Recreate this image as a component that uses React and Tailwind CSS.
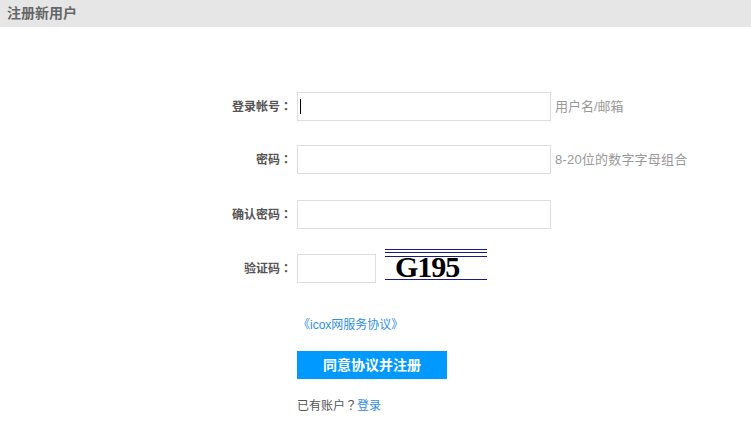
import React from 'react';

const font = { fontFamily: '"Liberation Sans", "Noto Sans CJK SC", sans-serif' };
const tc = { fontFamily: '"Noto Sans CJK TC", sans-serif' };

function Row({ label, children, className = '' }) {
    return (
        <div className={`flex items-center ${className}`}>
            <div className="w-[292px] shrink-0 text-right text-[12px] font-bold text-[#555]">
                {label}<span style={tc}>：</span>
            </div>
            <div className="ml-[5px] flex items-center">{children}</div>
        </div>
    );
}

export default function App() {
    return (
        <div className="w-[751px] h-[444px] bg-white overflow-hidden" style={font}>
            {/* Title bar */}
            <div className="h-[27px] bg-[#e6e6e6] flex items-center pl-[7px]">
                <span className="text-[14px] font-bold text-[#666]">注册新用户</span>
            </div>

            {/* Form */}
            <div className="pt-[65px]">
                <Row label="登录帐号">
                    <div className="relative">
                        <input className="w-[254px] h-[29px] border border-[#dedede] outline-none px-2 text-[12px]" />
                        <span className="absolute left-[3px] top-[7px] w-px h-[15px] bg-black"></span>
                    </div>
                    <span className="ml-[4px] text-[13px] text-[#999]">用户名/邮箱</span>
                </Row>

                <Row label="密码" className="mt-[24px]">
                    <input type="password" className="w-[254px] h-[29px] border border-[#dedede] outline-none px-2 text-[12px]" />
                    <span className="ml-[4px] text-[13px] tracking-[0.2px] text-[#999]">8-20位的数字字母组合</span>
                </Row>

                <Row label="确认密码" className="mt-[26px]">
                    <input type="password" className="w-[254px] h-[29px] border border-[#dedede] outline-none px-2 text-[12px]" />
                </Row>

                <Row label="验证码" className="mt-[25px]">
                    <input className="w-[79px] h-[29px] border border-[#dedede] outline-none px-2 text-[12px]" />
                    {/* Captcha image */}
                    <div className="relative ml-[9px] -mt-[8px] w-[102px] h-[34px] bg-white">
                        <div className="absolute left-0 right-0 top-[1px] h-px bg-[#1a1a8c]"></div>
                        <div className="absolute left-0 right-0 top-[4px] h-px bg-[#1a1a8c]"></div>
                        <div className="absolute left-0 right-0 top-[8px] h-px bg-[#1a1a8c]"></div>
                        <span
                            className="absolute left-[10px] top-[2px] text-[30px] font-bold leading-[34px] text-black tracking-[-1px]"
                            style={{ fontFamily: '"Liberation Serif", serif' }}
                        >
                            G195
                        </span>
                        <div className="absolute left-0 right-0 top-[31px] h-px bg-[#1a1a8c]"></div>
                    </div>
                </Row>

                <div className="pl-[298px] mt-[29px]">
                    <a className="text-[12px] text-[#2f8de4] cursor-pointer">《icox网服务协议》</a>
                </div>

                <div className="pl-[297px] mt-[15px]">
                    <button className="w-[150px] h-[28px] bg-[#0099ff] text-white text-[14px] font-bold">
                        同意协议并注册
                    </button>
                </div>

                <div className="pl-[297px] mt-[17px] text-[12px] text-[#555]">
                    已有账户<span style={tc}>？</span><a className="text-[#2f8de4] cursor-pointer">登录</a>
                </div>
            </div>
        </div>
    );
}
